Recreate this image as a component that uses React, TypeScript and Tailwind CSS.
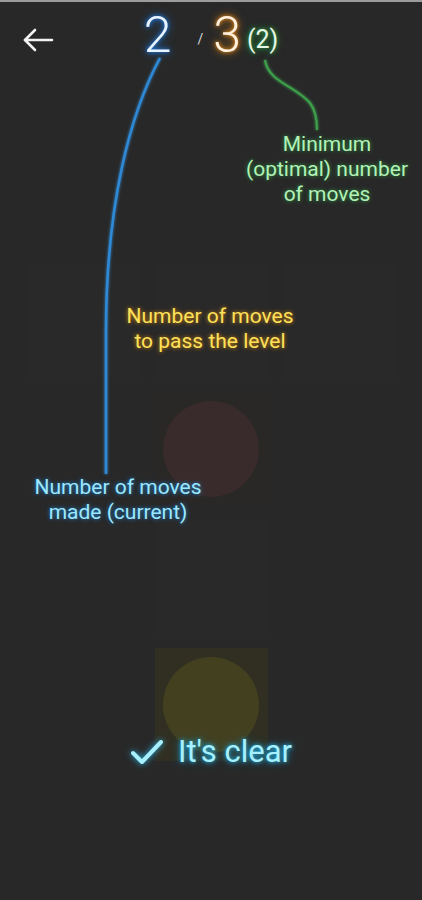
import React from "react";

// glow helpers, written out in full so Tailwind picks them up
const blueGlow = "[text-shadow:0_0_4px_#1e88ff,0_0_10px_#1e6fd0]";
const orangeGlow = "[text-shadow:0_0_4px_#ff9a1a,0_0_10px_#d07a10]";
const greenGlow = "[text-shadow:0_0_4px_#2fae4a,0_0_8px_#237a34]";

function Cell({ tone }: { tone: "none" | "red" | "yellow" }) {
  const bg =
    tone === "red" ? "bg-[#2a2727]" : tone === "yellow" ? "bg-[#302f22]" : "bg-[#292929]";
  return (
    <div className={`flex h-[113px] w-[113px] items-center justify-center ${bg}`}>
      {tone === "red" && <div className="h-[96px] w-[96px] rounded-full bg-[#392b2b]" />}
      {tone === "yellow" && <div className="h-[96px] w-[96px] rounded-full bg-[#434020]" />}
    </div>
  );
}

export default function App() {
  return (
    <div
      className="relative h-[900px] w-[422px] overflow-hidden border-t-2 border-[#9c9c9c] bg-[#282828]"
      style={{ fontFamily: "Roboto, 'Open Sans', sans-serif" }}
    >
      {/* Header */}
      <div className="grid h-[74px] grid-cols-[1fr_auto_1fr] items-center">
        <div className="pl-[22px] pt-[2px]">
          <svg width="32" height="24" viewBox="0 0 32 24" fill="none" stroke="#f2f2f2" strokeWidth="2.6" strokeLinecap="round" strokeLinejoin="round">
            <path d="M30 12H3" />
            <path d="M13 2L3 12L13 22" />
          </svg>
        </div>
        <div className="flex items-end pb-[8px] leading-none">
          <span className={`text-[50px] font-light text-[#e8f4ff] ${blueGlow}`}>2</span>
          <span className="ml-[26px] mb-[14px] text-[14px] text-[#d8d8d8]">/</span>
          <span className={`ml-[10px] text-[50px] font-light text-[#fff1de] ${orangeGlow}`}>3</span>
          <span className={`ml-[6px] mb-[8px] text-[25px] text-[#e6f7e6] ${greenGlow}`}>(2)</span>
        </div>
        <div />
      </div>

      {/* Board */}
      <div className="flex flex-col items-center">
        <div className="mt-[188px] flex gap-[15px]">
          <Cell tone="none" />
          <Cell tone="none" />
          <Cell tone="none" />
        </div>
        <div className="mt-[15px] flex flex-col gap-[15px]">
          <Cell tone="red" />
          <Cell tone="none" />
          <Cell tone="yellow" />
        </div>
      </div>

      {/* Tutorial overlay */}
      <svg className="pointer-events-none absolute inset-0" width="422" height="900" fill="none">
        <defs>
          <filter id="glow" x="-50%" y="-10%" width="200%" height="120%">
            <feGaussianBlur stdDeviation="1.5" result="b" />
            <feMerge>
              <feMergeNode in="b" />
              <feMergeNode in="SourceGraphic" />
            </feMerge>
          </filter>
        </defs>
        <path d="M160 56 C131 110, 106 200, 106 330 L106 472" stroke="#2f8ad6" strokeWidth="2.5" filter="url(#glow)" />
        <path d="M228 56 L228 300" stroke="#e3920f" strokeWidth="2.5" filter="url(#glow)" />
        <path d="M265 58 C268 80, 296 84, 310 101 C316 109, 317 118, 317 128" stroke="#3c9f4b" strokeWidth="2.2" filter="url(#glow)" />
      </svg>

      <div className="absolute left-[227px] top-[130px] w-[200px] text-center text-[21px] leading-[25px] text-[#b2f2b8] [text-shadow:0_0_4px_#2f9a44]">
        Minimum
        <br />
        (optimal) number
        <br />
        of moves
      </div>

      <div className="absolute left-[110px] top-[302px] w-[200px] text-center text-[21px] leading-[25px] text-[#ffe15a] [text-shadow:0_0_4px_#d88a10]">
        Number of moves
        <br />
        to pass the level
      </div>

      <div className="absolute left-[18px] top-[473px] w-[200px] text-center text-[21px] leading-[25px] text-[#9be8ff] [text-shadow:0_0_4px_#1f8ae0]">
        Number of moves
        <br />
        made (current)
      </div>

      <div className="absolute left-0 right-0 top-[734px] flex items-center justify-center gap-[14px]">
        <svg width="34" height="26" viewBox="0 0 34 26" fill="none" stroke="#a6f0ff" strokeWidth="4" strokeLinecap="round" strokeLinejoin="round" className="[filter:drop-shadow(0_0_3px_#27b6e8)]">
          <path d="M3 14L12 23L31 3" />
        </svg>
        <span className="text-[31px] leading-none text-[#a6f0ff] [text-shadow:0_0_4px_#1fb0e6,0_0_8px_#1a86b0]">
          It's clear
        </span>
      </div>
    </div>
  );
}
